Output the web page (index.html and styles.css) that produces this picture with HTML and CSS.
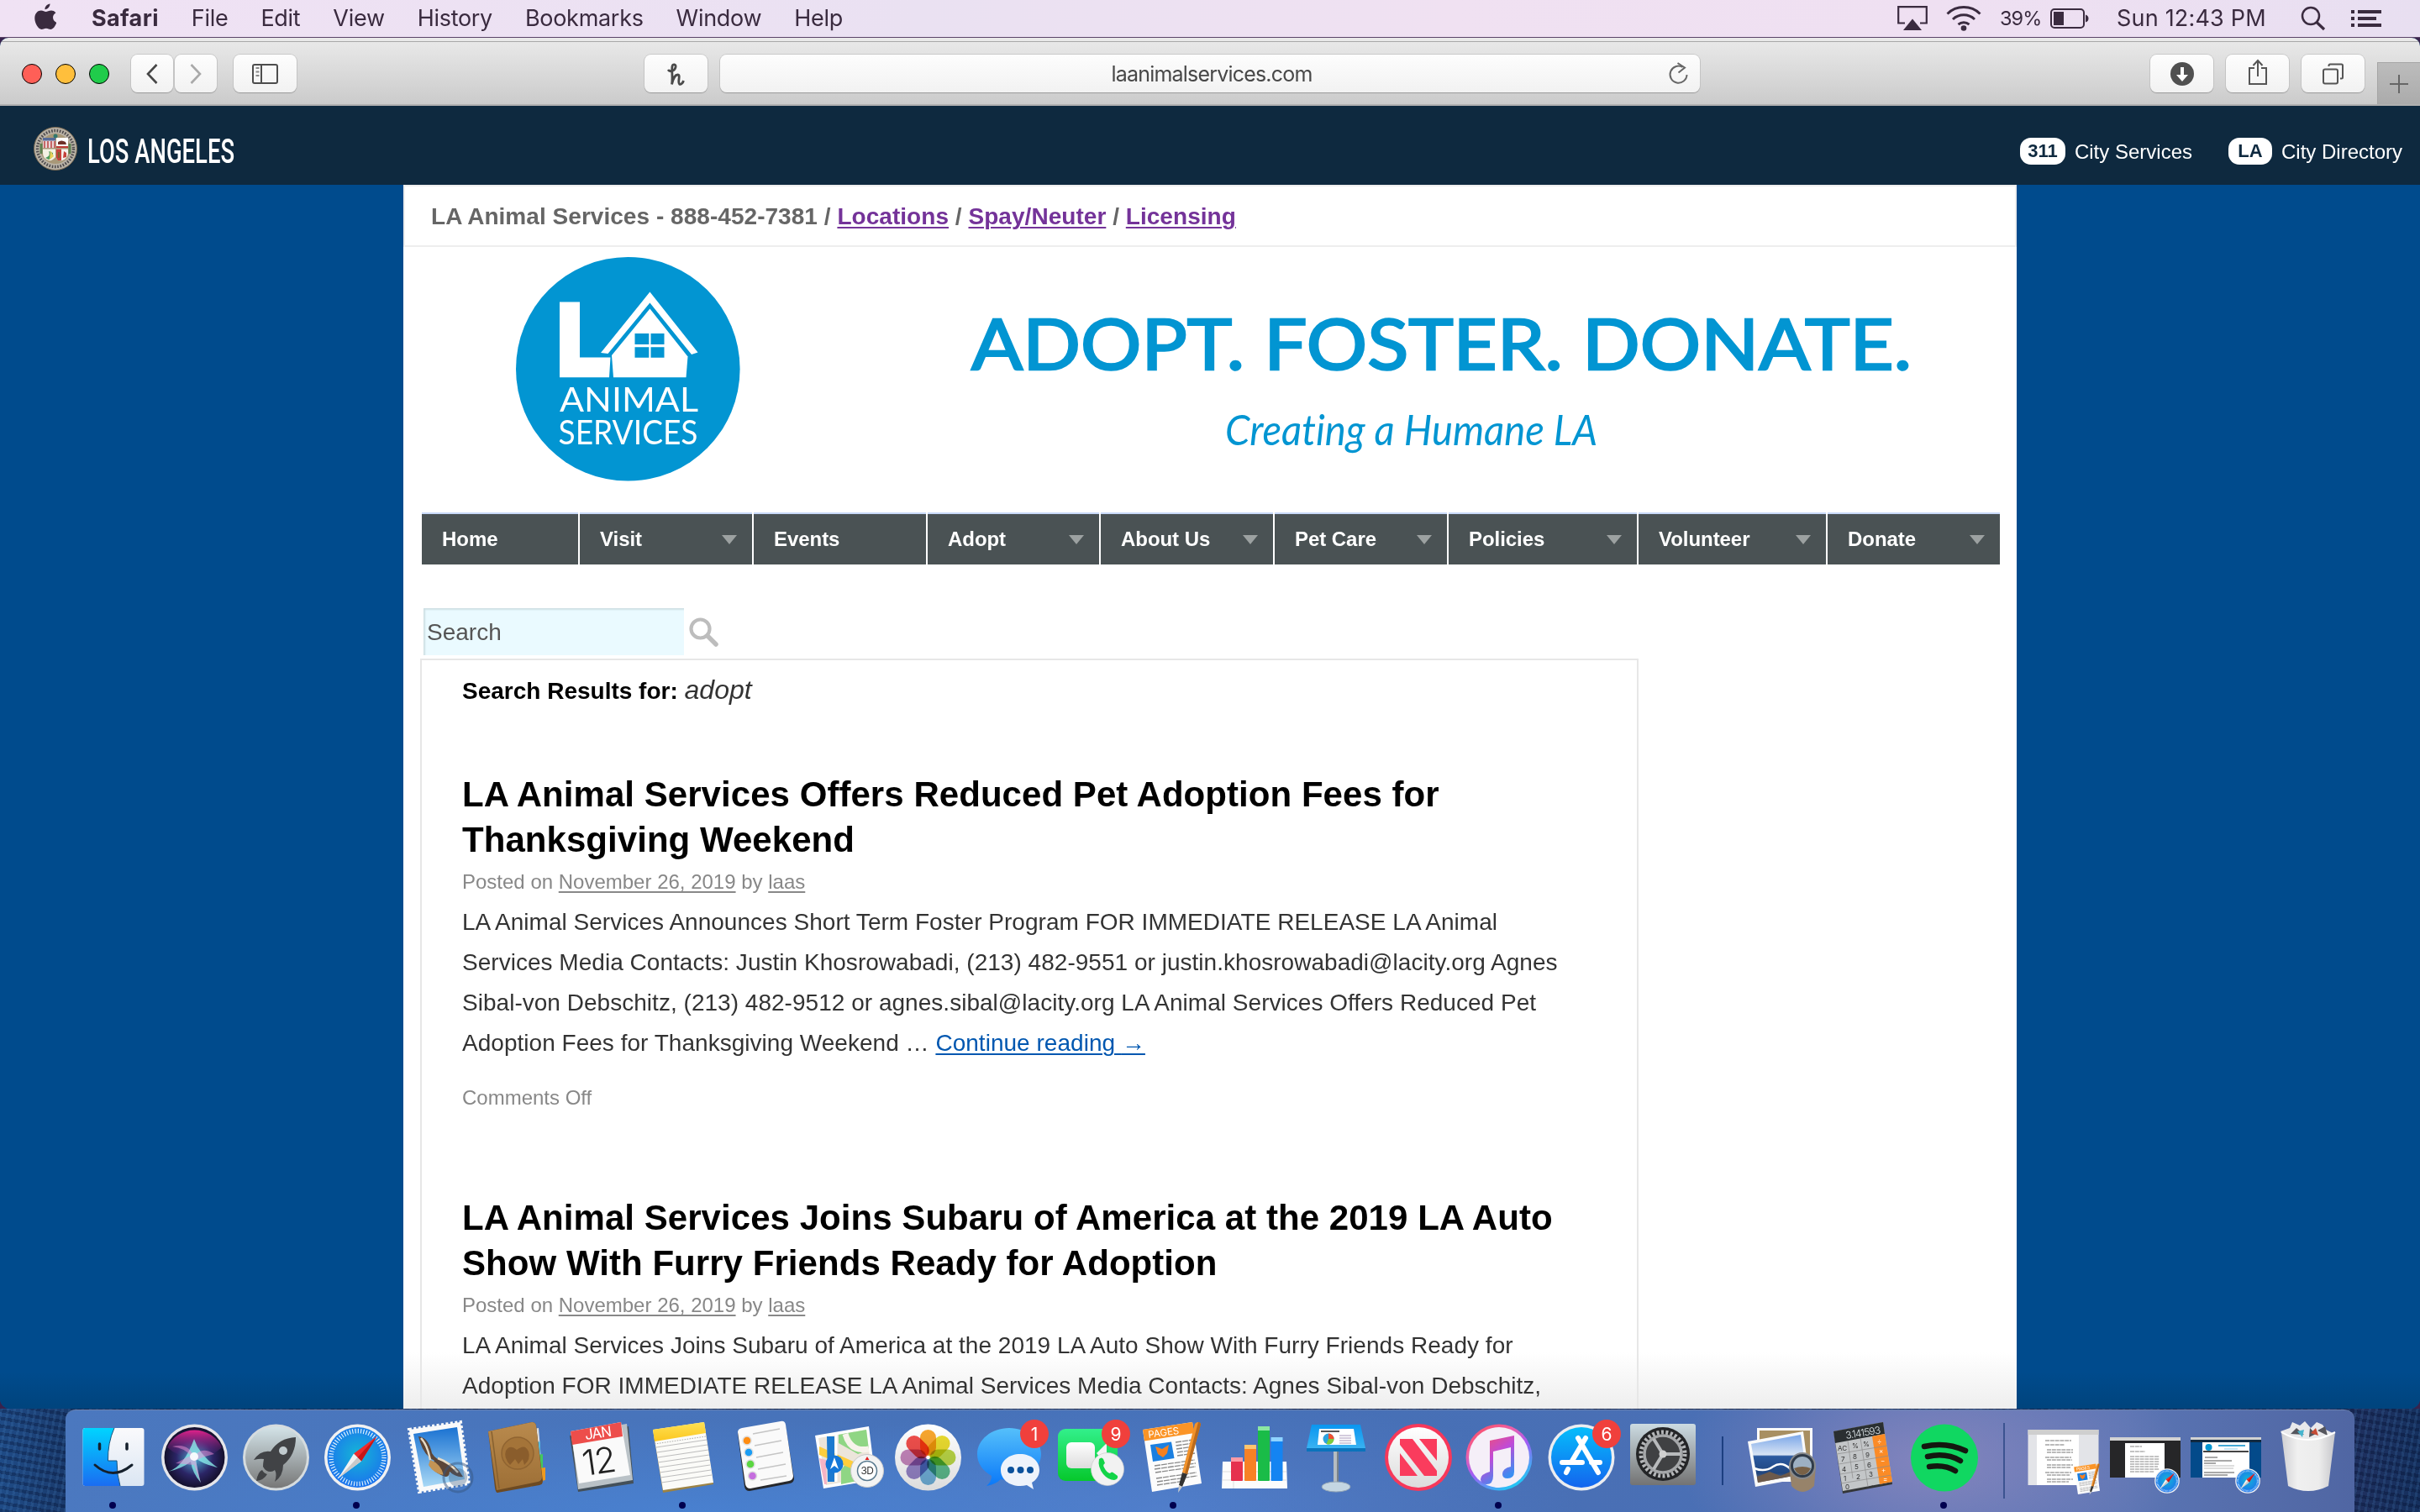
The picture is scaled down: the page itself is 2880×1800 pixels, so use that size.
FILE: index.html
```html
<!DOCTYPE html>
<html lang="en">
<head>
<meta charset="utf-8">
<title>LA Animal Services - Search Results</title>
<link rel="stylesheet" href="styles.css">
</head>
<body>
<svg class="defs" width="0" height="0" aria-hidden="true">
  <defs>
    <linearGradient id="gFinder" x1="0" y1="0" x2="0" y2="1"><stop offset="0" stop-color="#00d4ff"/><stop offset="1" stop-color="#1a6df2"/></linearGradient>
    <linearGradient id="gFace" x1="0" y1="0" x2="0" y2="1"><stop offset="0" stop-color="#fafafc"/><stop offset="1" stop-color="#dbe6f3"/></linearGradient>
    <radialGradient id="gSiri" cx=".5" cy=".5" r=".5"><stop offset="0" stop-color="#4fb0d8"/><stop offset=".6" stop-color="#2b2566"/><stop offset="1" stop-color="#14102c"/></radialGradient>
    <linearGradient id="gSiriTop" x1="0" y1="0" x2="0" y2="1"><stop offset="0" stop-color="#e0218a"/><stop offset="1" stop-color="#5a2a8a" stop-opacity="0"/></linearGradient>
    <linearGradient id="gLaunch" x1="0" y1="0" x2="0" y2="1"><stop offset="0" stop-color="#d3e3e8"/><stop offset="1" stop-color="#777"/></linearGradient>
    <radialGradient id="gSafari" cx=".5" cy=".45" r=".55"><stop offset="0" stop-color="#15b6d6"/><stop offset="1" stop-color="#1b72ee"/></radialGradient>
    <linearGradient id="gSky" x1="0" y1="0" x2="0" y2="1"><stop offset="0" stop-color="#1a72d2"/><stop offset="1" stop-color="#a8d8f5"/></linearGradient>
    <linearGradient id="gBook" x1="0" y1="0" x2="0" y2="1"><stop offset="0" stop-color="#b98a4d"/><stop offset="1" stop-color="#9d6f36"/></linearGradient>
    <linearGradient id="gMsg" x1="0" y1="0" x2="0" y2="1"><stop offset="0" stop-color="#55c0fb"/><stop offset="1" stop-color="#0a78f8"/></linearGradient>
    <linearGradient id="gFt" x1="0" y1="0" x2="0" y2="1"><stop offset="0" stop-color="#32f08b"/><stop offset="1" stop-color="#06c82c"/></linearGradient>
    <linearGradient id="gWhite" x1="0" y1="0" x2="0" y2="1"><stop offset="0" stop-color="#fff"/><stop offset="1" stop-color="#dcdcdc"/></linearGradient>
    <linearGradient id="gKey" x1="0" y1="0" x2="0" y2="1"><stop offset="0" stop-color="#0a96f0"/><stop offset="1" stop-color="#3fb6f2"/></linearGradient>
    <linearGradient id="gTunes" x1="0" y1="0" x2=".6" y2="1"><stop offset="0" stop-color="#ff4a4a"/><stop offset=".35" stop-color="#ee5fa8"/><stop offset=".6" stop-color="#a35bf5"/><stop offset="1" stop-color="#25c3f5"/></linearGradient>
    <linearGradient id="gNote" x1="0" y1="0" x2=".5" y2="1"><stop offset="0" stop-color="#f5506a"/><stop offset=".5" stop-color="#c04ad8"/><stop offset="1" stop-color="#3a8ef2"/></linearGradient>
    <linearGradient id="gStore" x1="0" y1="0" x2="0" y2="1"><stop offset="0" stop-color="#05bdfb"/><stop offset="1" stop-color="#1464ee"/></linearGradient>
    <linearGradient id="gPref" x1="0" y1="0" x2="0" y2="1"><stop offset="0" stop-color="#ccdbe2"/><stop offset="1" stop-color="#737373"/></linearGradient>
    <linearGradient id="gSea" x1="0" y1="0" x2="0" y2="1"><stop offset="0" stop-color="#7aa6e8"/><stop offset=".42" stop-color="#d8e4f4"/><stop offset=".45" stop-color="#2c5aa0"/><stop offset=".8" stop-color="#20467f"/><stop offset="1" stop-color="#8d7a68"/></linearGradient>
    <linearGradient id="gCan" x1="0" y1="0" x2="1" y2="0"><stop offset="0" stop-color="#cfcfd2"/><stop offset=".3" stop-color="#f0f0f0"/><stop offset=".7" stop-color="#ececec"/><stop offset="1" stop-color="#c6c6ca"/></linearGradient>
    <linearGradient id="gYellow" x1="0" y1="0" x2="0" y2="1"><stop offset="0" stop-color="#ffe254"/><stop offset="1" stop-color="#fbc61f"/></linearGradient>
    <symbol id="safari" viewBox="0 0 80 80">
      <circle cx="40" cy="40" r="39.5" fill="#f1f1f1"/>
      <circle cx="40" cy="40" r="36" fill="url(#gSafari)"/>
      <circle cx="40" cy="40" r="31.5" fill="none" stroke="#e8f6ff" stroke-width="5.5" stroke-dasharray="1.1 2.2"/>
      <path d="M63 15 44.500 44.500 35.500 35.500Z" fill="#ee2b2b"/>
      <path d="M17 65 35.500 35.500 44.500 44.500Z" fill="#f2f2f2"/>
      <path d="M63 15 44.500 44.500 40 40Z" fill="#c41717"/>
      <path d="M17 65 44.500 44.500 40 40Z" fill="#c9c9c9"/>
    </symbol>
    <symbol id="pages" viewBox="0 0 72 86">
      <path d="M0 10 59 1 70 74 11 84Z" fill="#fcfcfc"/>
      <path d="M0 10 59 1 61.500 14 2 23.500Z" fill="#fb9426"/>
      <text x="7" y="20" transform="rotate(-8 7 20)" class="pages-label">PAGES</text>
      <path d="M9 28 34 24.500 37.500 44 12 48Z" fill="#1b7fe0"/>
      <path d="M15 30 23 33 31 28 29 38 24 43 18 39Z" fill="#f58020"/>
      <path d="M39 25 60 22M39.500 29 60 26M40 33 61 30M41 37 61 34M41 41 62 38M14 53 62 46M14 57 63 50M15 61 63 54M16 68 64 61M17 72 65 65M17 76 50 71" stroke="#8b8b8b" stroke-width="1.300" stroke-dasharray="7 1"/>
      <path d="M62 3q4-4 7 0L53 63l-6-2Z" fill="#f2922a"/><path d="M66 1q3 0 3 3L53 63l-3-1Z" fill="#b96a1d"/>
      <path d="M47 61 53 63 47 78 43 76Z" fill="#333"/><path d="M43 76 47 78 42 85Z" fill="#ccc"/>
    </symbol>
  </defs>
</svg>

<header class="menubar">
  <nav class="menus">
    <svg class="apple" viewBox="0 0 26 32"><path d="M18.500.5c.2 3-2.600 6.800-6 6.700C12.100 4 15.300.8 18.500.5ZM25.400 11.200c-5 3.100-4.200 9.600.9 11.700-1.200 3.600-4 8.100-7 8.100-2 0-2.800-1.300-5.400-1.300S10.300 31 8.500 31C4.600 31 .3 23.600.3 17.800.3 11.800 4 8.500 7.900 8.500c2.400 0 4.200 1.500 5.700 1.500 1.600 0 3.500-1.600 6.500-1.600 1.500 0 4 .7 5.300 2.800Z"/></svg>
    <b>Safari</b><span>File</span><span>Edit</span><span>View</span><span>History</span><span>Bookmarks</span><span>Window</span><span>Help</span>
  </nav>
  <div class="status">
    <svg class="ic-airplay" viewBox="0 0 36 30"><path d="M9 20.500H1.200V1.200H34.800V20.500H27" fill="none" stroke="#3a2b3f" stroke-width="2.200"/><path d="M18 15.500 29 29H7Z" fill="#3a2b3f"/></svg>
    <svg class="ic-wifi" viewBox="0 0 42 30"><path d="M1.500 9.500a28 28 0 0 1 39 0M8 16a19 19 0 0 1 26 0M14.500 22.200a10 10 0 0 1 13 0" fill="none" stroke="#3a2b3f" stroke-width="3"/><circle cx="21" cy="26.500" r="3.300" fill="#3a2b3f"/></svg>
    <span class="pct">39%</span>
    <svg class="ic-batt" viewBox="0 0 46 24"><rect x="1" y="1" width="39" height="22" rx="4" fill="none" stroke="#3a2b3f" stroke-width="2"/><rect x="4" y="4" width="12" height="16" fill="#3a2b3f"/><path d="M42 7.500q3.500 1 3.500 4.500t-3.500 4.500Z" fill="#3a2b3f"/></svg>
    <span class="clock">Sun 12:43 PM</span>
    <svg class="ic-find" viewBox="0 0 30 30"><circle cx="12" cy="12" r="10" fill="none" stroke="#3a2b3f" stroke-width="2.500"/><path d="M19 19.500 28 28" stroke="#3a2b3f" stroke-width="3.200"/></svg>
    <svg class="ic-list" viewBox="0 0 36 20"><path d="M0 2h4M8 2h28M0 10h4M8 10h22M0 18h4M8 18h28" stroke="#3a2b3f" stroke-width="4"/></svg>
  </div>
</header>

<main class="window">
  <div class="stack-edge"></div>
  <div class="toolbar">
    <div class="lights"><i class="red"></i><i class="amber"></i><i class="green"></i></div>
    <div class="btn nav-btn back"><svg viewBox="0 0 14 24"><path d="M12.500 1 2 12l10.500 11" fill="none" stroke="#474747" stroke-width="2.600"/></svg></div>
    <div class="btn nav-btn fwd"><svg viewBox="0 0 14 24"><path d="M1.500 1 12 12 1.500 23" fill="none" stroke="#a9a9a9" stroke-width="2.600"/></svg></div>
    <div class="btn side"><svg class="i32" viewBox="0 0 32 24"><rect x="1" y="1" width="29" height="22" rx="2" fill="none" stroke="#4d4d4d" stroke-width="2"/><path d="M11 1v22" stroke="#4d4d4d" stroke-width="2"/><path d="M4.500 5h4M4.500 9.500h4M4.500 14h4" stroke="#8a8a8a" stroke-width="2"/></svg></div>
    <div class="btn honey"><svg viewBox="0 0 26 28"><path d="M3 9c2 3 8 2 9-3 .6-3.500-3.400-4.500-4-1C7 11 9 18 7.500 26.500 9 19 12 15 14.500 15c4 0-.5 8.500 2 11 1.500 1 4-.5 5-4" fill="none" stroke="#4a4a4a" stroke-width="2.800"/></svg></div>
    <div class="address"><span></span><span class="url">laanimalservices.com</span>
      <svg class="reload" viewBox="0 0 26 28"><path d="M22.500 15a10 10 0 1 1-5-9" fill="none" stroke="#666" stroke-width="2"/><path d="M11.500 1 20 6.500l-7.500 6" fill="none" stroke="#666" stroke-width="2"/></svg></div>
    <div class="btn down"><svg viewBox="0 0 28 28"><circle cx="14" cy="14" r="14" fill="#505050"/><path d="M12 6h4v9h5l-7 8-7-8h5Z" fill="#fff"/></svg></div>
    <div class="btn share"><svg class="tall" viewBox="0 0 24 32"><path d="M8 11H2v19h20V11h-6M12 21V3M6.500 8 12 2l5.500 6" fill="none" stroke="#555" stroke-width="2"/></svg></div>
    <div class="btn tabs"><svg viewBox="0 0 28 28"><rect x="2" y="8.500" width="17" height="17" rx="2" fill="none" stroke="#555" stroke-width="2"/><path d="M8.500 5V4q0-1.500 1.500-1.500H23.500q1.500 0 1.500 1.500V18q0 1.500-1.500 1.500H22" fill="none" stroke="#555" stroke-width="2"/></svg></div>
    <div class="newtab"><svg viewBox="0 0 24 24"><path d="M12 1v22M1 12h22" stroke="#666" stroke-width="2"/></svg></div>
  </div>

  <div class="citybar">
    <div class="brand">
      <svg class="seal" viewBox="0 0 52 52"><circle cx="26" cy="26" r="25.500" fill="#b9b2a6" stroke="#7b6a52"/><circle cx="26" cy="26" r="21.500" fill="none" stroke="#4d4a4c" stroke-width="3.400" stroke-dasharray="1.600 1.700"/><circle cx="26" cy="26" r="18" fill="#a89878"/><circle cx="26" cy="11" r="2.500" fill="#31786d"/><path d="M9 20v12M43 20v12" stroke="#5c8050" stroke-width="3"/>
        <path d="M11 13H26V25H11Z" fill="#e9d5d5"/><path d="M11 13H26V16.500H11Z" fill="#566b9a"/><path d="M13 17v8M17 17v8M21 17v8M25 17v8" stroke="#bd4c4c" stroke-width="1.600"/>
        <path d="M27 13H41V25H27Z" fill="#fff"/><path d="M29 18q4-3 9 0l1 3H29Z" fill="#6f3128"/><path d="M27 23H41V25H27Z" fill="#bf3b35"/>
        <path d="M11 26.500H26V36Q22 41 18 40 11 38 11 31Z" fill="#f3f1e4"/><path d="M14 37q7-3 4-8l5 2q1 5-5 8Z" fill="#4c9a5b"/><path d="M20 28l4 7-5 4Z" fill="#e8d05a"/>
        <path d="M27 26.500H41V32Q40 38 34 40q-5 1-7-3Z" fill="#f5f1ee"/><path d="M27 26.500h6V40h-4l-2-3ZM36 29l3 2v5l-4 1Z" fill="#c5423b"/><path d="M29 30h2v7h-2Z" fill="#7c622d"/></svg>
      <svg class="wordmark" viewBox="0 0 176 52"><text x="0" y="40" textLength="175" lengthAdjust="spacingAndGlyphs">LOS ANGELES</text></svg>
    </div>
    <div class="citylinks">
      <span class="pill">311</span><span>City Services</span><span class="pill la">LA</span><span>City Directory</span>
    </div>
  </div>

  <div class="viewport">
    <div class="page">
      <div class="contact">LA Animal Services - 888-452-7381 / <a>Locations</a> / <a>Spay/Neuter</a> / <a>Licensing</a></div>
      <div class="banner">
        <svg class="logo" viewBox="614 306 267 267">
          <circle cx="747.300" cy="439.300" r="133.300" fill="#0295d2"/>
          <path d="M666 359.500H690V425.500H726.500L725 449.300H666Z" fill="#fff"/>
          <path d="M773.400 347.500 830.500 419.500 823 422 773.400 360.500 723.500 421 715 420Z" fill="#fff"/>
          <path d="M773.400 367.500 818.500 424.500 816.500 449.300H730L728 423Z" fill="#fff"/>
          <path d="M755.500 397H772.300V410H755.500ZM774.500 397H790.500V410H774.500ZM755.500 413.300H772.300V425.700H755.500ZM774.500 413.300H790.500V425.700H774.500Z" fill="#0295d2"/>
          <text class="logo-text" x="666" y="489.500" textLength="165" lengthAdjust="spacingAndGlyphs">ANIMAL</text>
          <text class="logo-text" x="664.500" y="528.700" textLength="166" lengthAdjust="spacingAndGlyphs">SERVICES</text>
        </svg>
        <svg class="slogan" viewBox="1150 346 1140 214">
          <text class="slogan-main" x="1156" y="440" textLength="1119" lengthAdjust="spacingAndGlyphs">ADOPT. FOSTER. DONATE.</text>
          <text class="slogan-sub" x="1458" y="530" textLength="443" lengthAdjust="spacingAndGlyphs">Creating a Humane LA</text>
        </svg>
      </div>
      <nav class="sitenav">
        <span>Home</span><span class="drop">Visit</span><span>Events</span><span class="drop">Adopt</span><span class="drop">About Us</span><span class="drop">Pet Care</span><span class="drop">Policies</span><span class="drop">Volunteer</span><span class="drop">Donate</span>
      </nav>
      <div class="search"><div class="field">Search</div>
        <svg viewBox="0 0 36 36"><circle cx="13.500" cy="13.500" r="11" fill="none" stroke="#bdbdbd" stroke-width="4.200"/><path d="M22 22 32 32" stroke="#bdbdbd" stroke-width="5.500" stroke-linecap="round"/></svg></div>
      <section class="results">
        <h1>Search Results for: <i>adopt</i></h1>
        <article>
          <h2>LA Animal Services Offers Reduced Pet Adoption Fees for<br>Thanksgiving Weekend</h2>
          <div class="meta">Posted on <a>November 26, 2019</a> by <a>laas</a></div>
          <p>LA Animal Services Announces Short Term Foster Program FOR IMMEDIATE RELEASE LA Animal<br>Services Media Contacts: Justin Khosrowabadi, (213) 482-9551 or justin.khosrowabadi@lacity.org Agnes<br>Sibal-von Debschitz, (213) 482-9512 or agnes.sibal@lacity.org LA Animal Services Offers Reduced Pet<br>Adoption Fees for Thanksgiving Weekend … <a>Continue reading <span class="arrow">→</span></a></p>
          <div class="meta comments">Comments Off</div>
        </article>
        <article>
          <h2>LA Animal Services Joins Subaru of America at the 2019 LA Auto<br>Show With Furry Friends Ready for Adoption</h2>
          <div class="meta">Posted on <a>November 26, 2019</a> by <a>laas</a></div>
          <p>LA Animal Services Joins Subaru of America at the 2019 LA Auto Show With Furry Friends Ready for<br>Adoption FOR IMMEDIATE RELEASE LA Animal Services Media Contacts: Agnes Sibal-von Debschitz,</p>
        </article>
      </section>
    </div>
  </div>
</main>

<footer class="desktop">
  <div class="dock">
    <svg viewBox="0 0 97 122"><rect x="12.500" y="22" width="73" height="69" rx="3" fill="url(#gFace)"/><path d="M15 22H50Q42 40 42.500 61H53Q53 78 57 91H15.500q-3 0-3-3V25q0-3 3-3Z" fill="url(#gFinder)"/><path d="M50 22Q42 40 42.500 61H53Q53 78 57 91" fill="none" stroke="#17537d" stroke-width="1"/><path d="M27 66Q48 85 71 66" fill="none" stroke="#15202c" stroke-width="3" stroke-linecap="round"/><path d="M32.500 41v6M65 41v6" stroke="#15202c" stroke-width="3.500" stroke-linecap="round"/><circle cx="48" cy="114" r="4" fill="#00004f"/></svg>
    <svg viewBox="0 0 97 122"><circle cx="48.500" cy="57" r="39.500" fill="#e6e6ea"/><circle cx="48.500" cy="57" r="36" fill="url(#gSiri)"/><path d="M16 45a36 36 0 0 1 65 0Q65 60 48 57 30 58 16 45Z" fill="url(#gSiriTop)"/><path d="M17 74Q36 68 48 35 54 54 76 69 58 65 50 58 52 75 56 87 46 76 44 62 34 70 17 74Z" fill="#8ff5f0" opacity=".75"/><path d="M22 44q20-5 26 13 8-14 24-4-14 3-22 8l6 27-8-22-22-2q9-5 18-9-7-9-22-11Z" fill="#f08fd6" opacity=".5"/><circle cx="48" cy="56" r="5" fill="#fff" opacity=".9"/></svg>
    <svg viewBox="0 0 97 122"><circle cx="48.500" cy="57" r="39.500" fill="#d6dcdf"/><circle cx="48.500" cy="57" r="36.500" fill="url(#gLaunch)"/><path d="M72 33Q52 34 42 50q-12-2-20 10 8-2 12-1-1 5-1 9 3 6 9 6 3 0 5-2 3 5 0 14 10-7 10-20Q72 54 72 33ZM32 72q-5 2-7 13 9-1 13-8-4-1-6-5Z" fill="#414346"/><circle cx="57" cy="49" r="5" fill="#c1cbcf"/></svg>
    <svg viewBox="0 0 97 122"><use href="#safari" x="8.500" y="17" width="80" height="80"/><circle cx="47" cy="114" r="4" fill="#00004f"/></svg>
    <svg viewBox="0 0 97 122"><path d="M13 24 74 15 84 88 25 98Z" fill="#fafafa" stroke="#fafafa" stroke-width="4" stroke-dasharray="3 2.500"/><path d="M18 29 70 21 79 83 30 92Z" fill="url(#gSky)"/><path d="M24 32q12 1 16 20 5 8 13 9 16 4 24 19-8 1-16-6 0 6-5 6-12-4-19-13 5-3 6-6Q29 54 24 32Z" fill="#5c4638"/><path d="M38 60q12 4 16 18-12-2-18-12Z" fill="#c49455"/><path d="M27 34q8 9 11 26M47 58q14 5 24 17" fill="none" stroke="#e8dcc6" stroke-width="2.500"/><circle cx="71" cy="81" r="17" fill="none" stroke="#35557f" stroke-width="3" opacity=".5"/><circle cx="71" cy="81" r="11" fill="#35557f" opacity=".35"/></svg>
    <svg viewBox="0 0 97 122"><path d="M58 24 70 22 75 86 60 92Z" fill="#dfdfdf"/><path d="M62 40 72 38V54H62Z" fill="#58b8dd"/><path d="M62 55 75 53V70H62Z" fill="#43c85e"/><path d="M62 71 78 69V84L62 88Z" fill="#ee9a20"/><path d="M10 26 62 15q4 0 5 4l8 66q0 4-4 5L21 99q-2 0-3-6Z" fill="#6d4a22"/><path d="M10 26 62 15q4 0 5 4l7 61q0 5-5 6L20 96Z" fill="url(#gBook)"/><path d="M14 26 23 94" stroke="#86602f" stroke-width="1.500"/><circle cx="45" cy="52" r="19" fill="#a47439" stroke="#906431" stroke-width="1.500"/><path d="M36 66q-8-9-5-17 5-8 13-1 10-8 14 2 3 9-5 16l-2-7-5 6-4-6Z" fill="#8a5d2c"/></svg>
    <svg viewBox="0 0 97 122"><path d="M10 31 80 20 86 88 20 98Z" fill="#445059"/><path d="M12 28 78 17 85 84 20 95Z" fill="#bac2c7"/><path d="M11 26 71 15 82 78 21 88Z" fill="#fafafa"/><path d="M11 26 71 15 73 32 13 42Z" fill="#ed4e4b"/><text class="cal-mon" x="29" y="36" transform="rotate(-8 29 36)">JAN</text><text class="cal-day" x="27" y="79" transform="rotate(-8 27 79)">12</text></svg>
    <svg viewBox="0 0 97 122"><path d="M12 24 73 15 84 89 24 99Z" fill="#9c8345"/><path d="M12 24 73 15 84 87 24 96Z" fill="#fbfbf8"/><path d="M12 24 73 15 75 28 14 38Z" fill="url(#gYellow)"/><path d="M16 45 76 36M17 51 77 42M18 57 78 48M18 63 79 54M19 69 80 60M20 75 80 66M21 81 81 72M22 87 82 78" stroke="#bdbdbd" stroke-width="1.200"/><path d="M14 41 75 32" stroke="#aaa" stroke-dasharray="1.500 1.500"/><circle cx="47" cy="114" r="4" fill="#00004f"/></svg>
    <svg viewBox="0 0 97 122"><path d="M16 29q0-4 5-5l46-8q5-1 6 4l10 62q0 5-5 6l-48 9q-5 0-6-5Z" fill="#26282c"/><path d="M16 27q0-4 5-5l46-8q5-1 6 4l9 61q0 5-5 6l-46 9q-5 0-6-5Z" fill="#fafafa"/><g stroke="#ddd" stroke-width="1.500"><circle cx="27" cy="37" r="5" fill="#ff8d12"/><circle cx="29" cy="51" r="5" fill="#1b9df4"/><circle cx="31" cy="65" r="5" fill="#5bd641"/><circle cx="33.500" cy="79" r="5" fill="#c56ede"/></g><path d="M34 29 66 23M36 43 68 37M38 57 70 51M40 71 73 65M43 84 74 79" stroke="#c5c5c5" stroke-width="1.300"/></svg>
    <svg viewBox="0 0 97 122"><path d="M11 31 75 20 83 84 21 94Z" fill="#fff"/><path d="M15 34 72 24 79 80 24 90Z" fill="#ece5da"/><path d="M39 30 72 24 75 48 62 53 39 40Z" fill="#8fd684"/><path d="M42 72 48 64 62 72V85L42 89Z" fill="#8fd684"/><path d="M16 44 77 71V80L16 54Z" fill="#ffce3c"/><path d="M25 32H34V86H26Z" fill="#1c79cf"/><path d="M36 30V86" stroke="#fff" stroke-width="3"/><path d="M16 58 24 60 25 89H22Z" fill="#f6b4c5"/><path d="M47 29q6 22 28 18" fill="none" stroke="#f7f3eb" stroke-width="7"/><circle cx="34" cy="65" r="10.500" fill="#1477d8"/><path d="M34 57 39 71 34 67 29 71Z" fill="#fff"/><circle cx="73" cy="73" r="19.500" fill="#f3f3f3" stroke="#c8c8c8"/><circle cx="73" cy="73" r="11.500" fill="#fff" stroke="#58798e" stroke-width="1.500"/><path d="M73 56 75.500 60H70.500Z" fill="#e02020"/><text class="map-3d" x="73" y="77" text-anchor="middle">3D</text></svg>
    <svg viewBox="0 0 97 122"><circle cx="48.500" cy="57" r="39.500" fill="url(#gWhite)"/><g transform="translate(48.500 57)" class="petals"><rect x="-9.500" y="-33" width="19" height="31" rx="9.500" fill="#f9a01c"/><rect x="-9.500" y="-33" width="19" height="31" rx="9.500" fill="#ead91e" transform="rotate(45)"/><rect x="-9.500" y="-33" width="19" height="31" rx="9.500" fill="#b4d336" transform="rotate(90)"/><rect x="-9.500" y="-33" width="19" height="31" rx="9.500" fill="#4fb583" transform="rotate(135)"/><rect x="-9.500" y="-33" width="19" height="31" rx="9.500" fill="#65acd9" transform="rotate(180)"/><rect x="-9.500" y="-33" width="19" height="31" rx="9.500" fill="#8d79c4" transform="rotate(225)"/><rect x="-9.500" y="-33" width="19" height="31" rx="9.500" fill="#c07cb6" transform="rotate(270)"/><rect x="-9.500" y="-33" width="19" height="31" rx="9.500" fill="#f0403c" transform="rotate(315)"/></g><circle cx="48.500" cy="57" r="2" fill="#fff"/></svg>
    <svg viewBox="0 0 97 122"><path d="M48 22c21 0 38 14 38 31S69 84 48 84q-5 0-10-1-6 6-17 8 6-5 6-12Q10 69 10 53c0-17 17-31 38-31Z" fill="url(#gMsg)"/><path d="M61 53c13 0 23 8 23 19 0 7-4 12-9 15l2 8-8-5q-4 1-8 1c-13 0-23-8-23-19s10-19 23-19Z" fill="#eef3fb"/><g fill="#0b519c"><circle cx="50" cy="72" r="4"/><circle cx="61.500" cy="72" r="4"/><circle cx="73" cy="72" r="4"/></g><circle cx="78" cy="29" r="17" fill="#f0403c"/><text class="badge" x="78" y="37" text-anchor="middle">1</text></svg>
    <svg viewBox="0 0 97 122"><rect x="9" y="23" width="71" height="62" rx="9" fill="url(#gFt)"/><rect x="19" y="39" width="34" height="31" rx="6" fill="url(#gWhite)"/><path d="M55 52 67 40V66Z" fill="#f4f4f4"/><circle cx="68" cy="71" r="19.500" fill="#f2f2f2" stroke="#ccc" stroke-width=".7"/><path d="M58 59q3-3 5 0l2 5q-3 2-1 5 3 6 7 7 2-3 5 0l4 3q1 4-4 5-7 0-13-7-7-9-5-18Z" fill="#13d448"/><circle cx="78" cy="29" r="17" fill="#f0403c"/><text class="badge" x="78" y="37" text-anchor="middle">9</text></svg>
    <svg viewBox="0 0 97 122"><use href="#pages" x="13" y="14" width="72" height="86"/><circle cx="49" cy="114" r="4" fill="#00004f"/></svg>
    <svg viewBox="0 0 97 122"><path d="M11 62H87L88 94H10Z" fill="#fcfcfc"/><path d="M11 74H87M11 84H87M24 62V94" stroke="#ddd"/><rect x="21" y="57" width="14" height="28" rx="1" fill="#e6314f"/><rect x="37" y="42" width="14" height="43" rx="1" fill="#f78125"/><rect x="53" y="20" width="14" height="65" rx="1" fill="#1abc48"/><rect x="68.500" y="33" width="14" height="52" rx="1" fill="#1484f2"/><path d="M21 57h14v5H21Z" fill="#ff9aa5"/><path d="M37 42h14v5H37Z" fill="#fcc56f"/><path d="M53 20h14v5H53Z" fill="#8be8a1"/><path d="M68.500 33h14v5H68.500Z" fill="#8fd3ff"/></svg>
    <svg viewBox="0 0 97 122"><path d="M46 48H52V92H46Z" fill="#b5bcc2"/><path d="M50 48H52V92H50Z" fill="#79828a"/><ellipse cx="49" cy="92" rx="17" ry="6" fill="#c4d6e2" stroke="#93a5b5"/><path d="M20 18H78L84 46V50H14V46Z" fill="url(#gKey)"/><path d="M14 46H84V50H14Z" fill="#0b73bb"/><path d="M29 23H70L73 42H27Z" fill="#fff"/><path d="M31 26H53" stroke="#555" stroke-width="2"/><circle cx="40" cy="35" r="6.500" fill="#2da2dd"/><path d="M40 35V28.500a6.500 6.500 0 0 1 6.500 6.500Z" fill="#f0502f"/><path d="M40 35H46.500a6.500 6.500 0 0 1-9 6Z" fill="#7ccc3e"/><path d="M53 31H67M53 34H67M53 37H67M53 40H67" stroke="#a9b" stroke-width="1.200"/></svg>
    <svg viewBox="0 0 97 122"><circle cx="50" cy="57" r="40" fill="#f7385a"/><circle cx="50" cy="57" r="36" fill="url(#gWhite)"/><path d="M28 35H43L72 73V79H57L28 42Z" fill="#fa3c5d"/><path d="M51 35H72V61ZM28 52 49 79H28Z" fill="#fa3c5d"/></svg>
    <svg viewBox="0 0 97 122"><circle cx="49" cy="57" r="39.500" fill="url(#gTunes)"/><circle cx="49" cy="57" r="36" fill="#f5eff8"/><path d="M38 37 67 31V74q0 8-8 8-6 0-6-5 0-7 10-9V45L42 50V79q0 10-8 10-7 0-7-6 0-6 11-9Z" fill="url(#gNote)"/><circle cx="48" cy="114" r="4" fill="#00004f"/></svg>
    <svg viewBox="0 0 97 122"><circle cx="50" cy="57" r="39.500" fill="#ecedf0"/><circle cx="50" cy="57" r="36" fill="url(#gStore)"/><g fill="none" stroke="#fff" stroke-width="6" stroke-linecap="round"><path d="M46 34 70 75M55 34 39 61M27 63H51M62 63H72M34 71 32 75"/></g><circle cx="80" cy="29" r="17" fill="#f0403c"/><text class="badge" x="80" y="37" text-anchor="middle">6</text></svg>
    <svg viewBox="0 0 97 122"><rect x="11" y="17" width="78" height="73" rx="3" fill="url(#gPref)"/><circle cx="50" cy="53" r="32" fill="#242527"/><circle cx="50" cy="53" r="26" fill="none" stroke="#b4b6b8" stroke-width="5" stroke-dasharray="3 2.440"/><circle cx="50" cy="53" r="22" fill="#404143" stroke="#a5a7a9" stroke-width="3.500"/><path d="M50 53H71M50 53 39 35M50 53 39 71" stroke="#b8babc" stroke-width="4"/><circle cx="50" cy="53" r="4.500" fill="#d0d0d0"/></svg>
    <i class="divider short"></i>
    <svg viewBox="0 0 97 122"><path d="M20 22H86V86H20Z" fill="#fafafa"/><path d="M23 25H83V80H23Z" fill="#a88f62"/><path d="M9 38 75 26 82 80 18 92Z" fill="#fafafa"/><path d="M13 41 72 30 79 76 21 87Z" fill="url(#gSea)"/><path d="M20 80 35 74 48 79 62 73 77 74 78 76 21 87Z" fill="#6d5a4b"/><path d="M17 70q12 5 22-2t20 2 18-2" stroke="#fff" fill="none" stroke-width="2.500"/><path d="M58 67H90L88 91Q74 105 61 91Z" fill="#97836a"/><circle cx="74" cy="67" r="16" fill="#888a8c"/><circle cx="74" cy="67" r="14" fill="#2f3b49"/><circle cx="74" cy="67" r="11" fill="#9db0c2"/><path d="M64 70q10-4 20 0-4 8-10 8t-10-8Z" fill="#786146"/></svg>
    <svg viewBox="0 0 97 122"><path d="M14 26 73 15 84 89 25 100Z" fill="#343638"/><path d="M14 26 73 15 84 86 25 97Z" fill="#c3c6c8"/><path d="M14 26 73 15 75 29 16 40Z" fill="#2a2f31"/><text class="calc-num" x="29" y="35" transform="rotate(-9 29 35)">3.141593</text><path d="M60 32 75 29 84 86 69 89Z" fill="#fb8b26"/><path d="M18 53 78 43M20 65 80 55M22 77 81 67M23 88 83 78M31 37 37 82M46 34 55 92" fill="none" stroke="#8c8c8c" stroke-width=".7"/><g class="calc-key"><text x="19" y="49">AC</text><text x="36" y="46">%</text><text x="49" y="44">%</text><text x="23" y="62">7</text><text x="37" y="59">8</text><text x="52" y="57">9</text><text x="24" y="74">4</text><text x="39" y="71">5</text><text x="54" y="69">6</text><text x="26" y="85">1</text><text x="41" y="83">2</text><text x="56" y="80">3</text><text x="28" y="95">0</text><text x="59" y="91">.</text></g><g class="calc-key op"><text x="66" y="41">÷</text><text x="68" y="52">×</text><text x="70" y="64">−</text><text x="71" y="75">+</text><text x="73" y="86">=</text></g></svg>
    <svg viewBox="0 0 97 122"><circle cx="49" cy="57.500" r="40" fill="#10d761"/><path d="M25 44q26-6 49 5M29 56q22-5 39 5M31 68q18-3 31 5" fill="none" stroke="#14170f" stroke-width="6.500" stroke-linecap="round"/><circle cx="48" cy="114" r="4" fill="#00004f"/></svg>
    <i class="divider long"></i>
    <svg viewBox="0 0 97 122"><rect x="6.500" y="24" width="84" height="66" fill="#e3e4e8"/><rect x="6.500" y="24" width="84" height="6" fill="#cfcfcf"/><path d="M17 30H67V90H17Z" fill="#fff"/><path d="M27 37H58M27 42H50M29 48H60M29 51H60M27 57H58M29 60H59M29 66H60M29 69H57M27 75H58M29 78H56M29 83H60M29 86H55" stroke="#777" stroke-width="1.200" stroke-dasharray="5 .8"/><use href="#pages" x="61" y="64" width="32" height="38"/></svg>
    <svg viewBox="0 0 97 122"><rect x="7" y="33" width="84" height="48" fill="#262628"/><rect x="7" y="33" width="84" height="4" fill="#d2d2d2"/><path d="M25 40H72V81H25Z" fill="#fff"/><path d="M31 44H45M31 50H49M31 56H66M31 59H66M31 62H66M31 65H66M31 68H64M31 71H66M31 74H60" stroke="#888" stroke-width="1.100" stroke-dasharray="5 .8"/><use href="#safari" x="60" y="70" width="30" height="30"/></svg>
    <svg viewBox="0 0 97 122"><rect x="6" y="33" width="84" height="48" fill="#034a8a"/><rect x="6" y="33" width="84" height="3" fill="#d2d2d2"/><rect x="6" y="36" width="84" height="3" fill="#11293f"/><path d="M20 39H76V81H20Z" fill="#fff"/><circle cx="27.500" cy="45" r="4" fill="#0295d2"/><path d="M39 43H71" stroke="#42a9d6" stroke-width="2"/><path d="M46 47H62" stroke="#8dcdea"/><path d="M21 50H75" stroke="#444" stroke-width="2"/><path d="M23 57H38M22 61H55M22 64H36M22 75H58M22 78H50" stroke="#555" stroke-width="1.200"/><path d="M22 67H58M22 70H57" stroke="#aaa" stroke-width=".8"/><use href="#safari" x="59" y="70" width="30" height="30"/></svg>
    <svg viewBox="0 0 97 122"><path d="M16 26 27 22 30 15 39 19 45 14 52 22 59 15 66 18 70 24 78 28 70 36H24Z" fill="#e9e9eb"/><path d="M28 29 35 22 44 30ZM51 22 58 29 50 33ZM60 25 69 20 72 31Z" fill="#55565d"/><path d="M36 26 44 24 42 33Z" fill="#46b5cf"/><path d="M52 28 58 22 61 31Z" fill="#c64c36"/><path d="M17 27Q48 45 81 27L73 91Q49 103 25 91Z" fill="url(#gCan)"/><path d="M17 27Q48 45 81 27" fill="none" stroke="#fff" stroke-width="2"/></svg>
  </div>
</footer>
</body>
</html>
```
FILE: styles.css
```css
* { box-sizing: border-box; }
body { margin: 0; width: 2880px; height: 1800px; overflow: hidden; display: flex; flex-direction: column; background: #38234d; font-family: "Liberation Sans", Arial, sans-serif; }
.defs { position: absolute; }

/* system menu bar */
.menubar { height: 45px; flex: none; display: flex; justify-content: space-between; background: linear-gradient(90deg, #f0e2f4, #eae1f2 38%, #f0e1f2 60%, #efe0f2 80%, #e8dff1); border-bottom: 1px solid #5b4468; font: 400 27px/44px Inter, sans-serif; color: #3a2b3f; }
.menus { display: flex; gap: 39px; padding-left: 41px; letter-spacing: -.3px; }
.menus b { font-weight: 700; letter-spacing: .35px; }
.apple { width: 26px; height: 32px; margin: 4px 3px 0 0; fill: #3a2b3f; }
.status { display: flex; align-items: center; padding-right: 46px; white-space: nowrap; }
.ic-airplay { width: 36px; height: 30px; margin-right: 22px; }
.ic-wifi { width: 42px; height: 30px; margin-right: 22px; }
.pct { width: 60px; font-size: 23.500px; letter-spacing: -.9px; }
.ic-batt { width: 46px; height: 24px; margin-right: 33px; }
.clock { width: 219px; letter-spacing: .2px; }
.ic-find { width: 30px; height: 30px; margin-right: 30px; }
.ic-list { width: 36px; height: 20px; }

/* browser chrome */
.window { height: 1632px; flex: none; display: flex; flex-direction: column; border-radius: 10px 10px 12px 12px; overflow: hidden; background: #004b8b; }
.stack-edge { height: 5px; flex: none; background: #e9e9e9; border-bottom: 1px solid #a8a8a8; }
.toolbar { height: 76px; flex: none; display: flex; align-items: center; background: linear-gradient(#e8e8e8, #cbcbcb); border-bottom: 2px solid #b0b0b0; padding: 1px 0 0 26px; }
.lights { display: flex; gap: 16px; margin-right: 26px; }
.lights i { width: 24px; height: 24px; border-radius: 50%; border: 1px solid; }
.red { background: #ff5f57; border-color: #e14640; }
.amber { background: #ffbf3c; border-color: #dfa023; }
.green { background: #20cc4b; border-color: #12ac28; }
.btn { height: 45px; width: 75px; margin-right: 15px; border-radius: 8px; background: linear-gradient(#fdfdfd, #f2f2f2); box-shadow: 0 1px 1px #9b9b9b, 0 0 0 1px #c9c9c9; display: flex; align-items: center; justify-content: center; flex: none; }
.btn svg { width: 28px; height: 28px; }
.nav-btn { width: 50px; }
.nav-btn svg { width: 14px; height: 24px; }
.back { margin-right: 2px; }
.fwd { margin-right: 20px; }
.side { margin-right: 414px; }
.btn .i32 { width: 32px; height: 24px; }
.btn .tall { width: 24px; height: 32px; margin-top: -3px; }
.honey { margin-right: 15px; }
.address { width: 1166px; height: 45px; margin-right: 536px; border-radius: 8px; background: linear-gradient(#fdfdfd, #f2f2f2); box-shadow: 0 1px 1px #9b9b9b, 0 0 0 1px #c9c9c9; display: grid; grid-template-columns: 1fr auto 1fr; align-items: center; padding: 0 12px 0 16px; flex: none; }
.url { font: 25px/46px Inter, sans-serif; letter-spacing: -.8px; color: #484848; }
.reload { width: 26px; height: 28px; justify-self: end; }
.newtab { flex: 1; height: 50px; align-self: flex-end; display: flex; align-items: center; justify-content: center; background: linear-gradient(#bcbcbc, #ababab); border: 1px solid #a5a5a5; border-right: 0; border-bottom: 0; }
.newtab svg { width: 24px; height: 24px; }

/* city header */
.citybar { height: 94px; flex: none; display: flex; justify-content: space-between; background: #0e293f; color: #fff; }
.brand { display: flex; padding: 25px 0 0 40px; gap: 12px; }
.seal { width: 52px; height: 52px; }
.wordmark { width: 176px; height: 52px; margin-top: 3px; overflow: visible; }
.wordmark text { font: 500 41.500px Roboto, sans-serif; fill: #fff; }
.citylinks { display: flex; align-items: center; padding: 16px 21px 0 0; font-size: 24px; line-height: 32px; white-space: nowrap; }
.citylinks span { margin-left: 11px; }
.citylinks .pill { background: #fff; color: #0e293f; font-weight: 700; font-size: 22px; width: 54px; height: 32px; line-height: 31px; text-align: center; border-radius: 13px; margin: 0 0 2px; }
.citylinks .la { width: 52px; margin-left: 43px; }

/* site */
.viewport { flex: 1; min-height: 0; background: linear-gradient(#004b8d 97%, #00447d); display: flex; justify-content: center; }
.page { width: 1920px; background: linear-gradient(#fff 0, #fff 1390px, #eee 1457px); color: #333; overflow: hidden; display: flex; flex-direction: column; flex: none; }
.contact { flex: none; height: 74px; border: 2px solid #eee; padding-left: 31px; font: 700 28px/72px "Liberation Sans", Arial, sans-serif; color: #666; letter-spacing: .04px; }
.contact a { color: #743399; text-decoration: underline; text-decoration-thickness: 2px; text-underline-offset: 3px; }
.banner { height: 316px; flex: none; display: flex; align-items: flex-start; padding: 12px 0 0 134px; }
.logo { width: 267px; height: 267px; flex: none; }
.logo-text { font: 400 40.500px Lato, sans-serif; fill: #fff; }
.slogan { width: 1140px; height: 214px; margin: 40px 0 0 269px; flex: none; overflow: visible; }
.slogan-main { font: 400 82.500px Lato, sans-serif; fill: #0295d2; stroke: #0295d2; stroke-width: 2.400px; }
.slogan-sub { font: italic 400 51px Lato, sans-serif; fill: #0295d2; font-variant-ligatures: none; }
.sitenav { height: 62px; flex: none; margin-left: 22px; width: 1878px; display: grid; grid-template-columns: 186px 205px 205px 204px 205px 205px 224px 223px 205px; column-gap: 2px; }
.sitenav span { display: flex; justify-content: space-between; align-items: center; background: #4a5254; border-top: 2px solid #c9daf9; color: #fff; font-weight: 700; font-size: 24px; padding: 0 18px 0 24px; letter-spacing: -.05px; }
.sitenav .drop::after { content: ""; border: 9px solid transparent; border-top: 11px solid #9ca1a1; border-bottom: 0; }
.search { flex: none; height: 112px; padding: 52px 0 0 24px; display: flex; gap: 6px; }
.field { width: 310px; height: 56px; background: #eafaff; box-shadow: inset 2px 2px 2px #cfe0e4; padding-left: 4px; font-size: 28px; line-height: 57px; color: #555; }
.search svg { width: 36px; height: 36px; margin-top: 11px; }
.results { flex: none; margin-left: 20px; width: 1450px; height: 1000px; border: 2px solid #e7e7e7; padding: 15px 0 0 48px; }
h1 { margin: 0; height: 40px; font: 700 28px/40px "Liberation Sans", Arial, sans-serif; color: #000; }
h1 i { font-weight: 400; font-size: 32px; color: #333; line-height: 40px; }
article { height: 504px; padding-top: 78px; white-space: nowrap; }
h2 { margin: 0; font: 700 42px/54px "Liberation Sans", Arial, sans-serif; color: #000; letter-spacing: .05px; }
.meta { font-size: 24px; line-height: 36px; color: #888; margin-top: 5px; }
.meta a { text-decoration: underline; text-decoration-thickness: 2px; text-underline-offset: 3px; }
article p { margin: 6px 0 0; font-size: 28px; line-height: 48px; letter-spacing: .025px; }
article p a { color: #0057b0; text-decoration: underline; text-decoration-thickness: 2px; text-underline-offset: 3px; }
.comments { margin-top: 23px; }

/* desktop + dock */
.desktop { height: 123px; flex: none; display: flex; justify-content: center; padding-top: 1px; background: repeating-linear-gradient(100deg, rgba(80,140,200,.16) 0 3px, transparent 3px 8px), repeating-linear-gradient(10deg, rgba(0,10,40,.3) 0 4px, transparent 4px 9px), linear-gradient(90deg, #1f4b86, #173260 4%, #20305f 97%, #15305e); }
.dock { width: 2724px; height: 122px; padding-left: 8px; display: flex; border-radius: 12px 12px 0 0; border-top: 1px solid #6c83b0; background: radial-gradient(ellipse 300px 160px at 2220px 60px, rgba(165,145,195,.6), transparent), radial-gradient(ellipse 800px 110px at 760px 122px, rgba(74,137,222,.6), transparent), radial-gradient(ellipse 500px 140px at 1300px 122px, rgba(100,140,220,.4), transparent), linear-gradient(90deg, #4b78bf, #4570b7 50%, #4b6fb4 75%, #5a75b4 90%, #5066a3); }
.dock svg { width: 97px; height: 122px; flex: none; margin-top: -1px; }
.divider { width: 2px; background: #1c3f80; flex: none; }
.short { height: 58px; margin: 31px 20px 0 23px; }
.long { height: 90px; margin: 15px 21px 0 22px; background: #3c5390; }
.pages-label { font: 11.500px Inter, sans-serif; fill: #fff; }
.cal-mon { font: 17px Inter, sans-serif; fill: #fff; letter-spacing: -1px; }
.cal-day { font: 300 42px Inter, sans-serif; fill: #222; letter-spacing: -2px; }
.map-3d { font: 12px Inter, sans-serif; fill: #333; letter-spacing: -.5px; }
.badge { font: 21px Inter, sans-serif; fill: #fff; }
.petals rect { mix-blend-mode: multiply; opacity: .92; }
.calc-num { font: 300 12px Inter, sans-serif; fill: #dfe7ea; letter-spacing: -.8px; }
.calc-key { font: 8px Inter, sans-serif; fill: #333; }
.calc-key.op { fill: #fff; }
```
